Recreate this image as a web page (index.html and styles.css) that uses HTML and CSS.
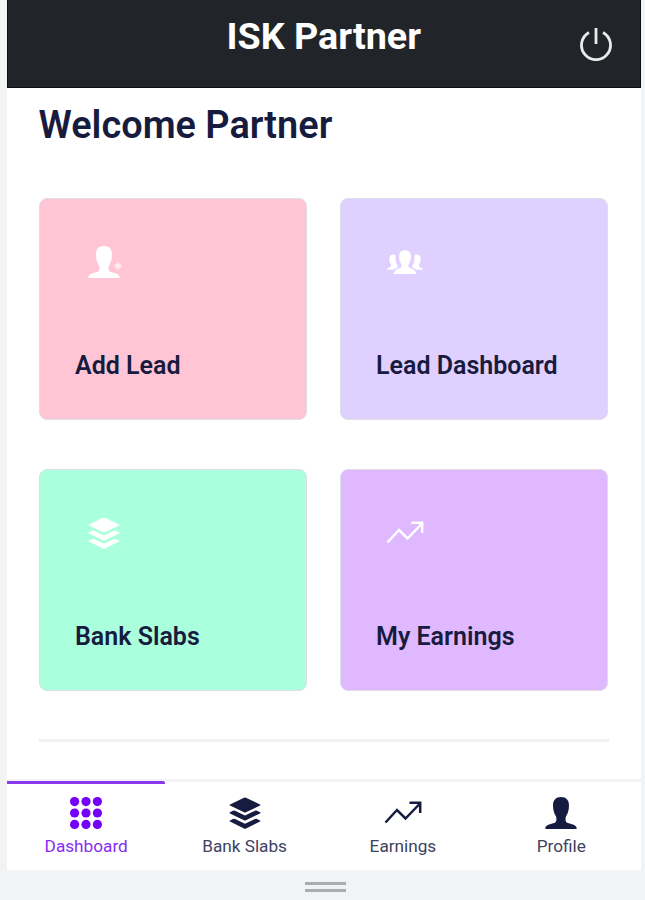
FILE: index.html
```html
<!DOCTYPE html>
<html lang="en">
<head>
<meta charset="utf-8">
<title>ISK Partner</title>
<link rel="stylesheet" href="styles.css">
</head>
<body>
<svg class="symbols" aria-hidden="true">
  <symbol id="layers" viewBox="0 0 32 32"><path d="M15 .7q1-.5 2 0L31 7.400q1 .6 0 1.200L17 15.300q-1 .5-2 0L1 8.600Q0 8 1 7.400z"/><path d="M1 15.200l3-1.400q1-.4 2 0l10 4.800 10-4.800q1-.4 2 0l3 1.400q1 .6 0 1.200L17 23.200q-1 .5-2 0L1 16.400q-1-.6 0-1.200z"/><path d="M1 23.400L4 22q1-.4 2 0l10 4.800L26 22q1-.4 2 0l3 1.400q1 .6 0 1.200l-14 6.800q-1 .5-2 0L1 24.600q-1-.6 0-1.200z"/></symbol>
  <symbol id="person" viewBox="0 0 32 32"><path d="M16 0c5.200 0 8 3 8 8.500 0 4.800-1.200 8-2.800 10.500-.9 1.600-1 5.600.6 6.600 1.800 1.200 8.900 1.600 9.900 5.200.2.800-.3 1.200-1.100 1.200H1.400c-.8 0-1.300-.4-1.100-1.200 1-3.600 8.100-4 9.900-5.200 1.600-1 1.500-5 .6-6.600C9.200 16.500 8 13.300 8 8.500 8 3 10.800 0 16 0z"/></symbol>
  <symbol id="trend" viewBox="0 0 38 24"><path d="M1.500 21.500L13 9l8.500 8.500L36 2.500M25.500 1.800H36.200V12" fill="none" stroke="currentColor" stroke-width="2.500"/></symbol>
</svg>
<div class="phone">
  <header class="topbar">
    <h1 class="brand">ISK Partner</h1>
    <svg class="power" viewBox="0 0 34 34"><path d="M10 5.500A14.500 14.500 0 1 0 24 5.500M17 1v16" fill="none" stroke="currentColor" stroke-width="2.800"/></svg>
  </header>
  <main class="content">
    <h2 class="welcome">Welcome Partner</h2>
    <div class="cards">
      <a class="card pink"><span class="slot"><svg class="icon" viewBox="0 0 32 32"><use href="#person"/></svg><svg class="plus" viewBox="0 0 8 8"><path d="M4 .5v7M.5 4h7" stroke="currentColor" stroke-width="2.800"/></svg></span><span class="label">Add Lead</span></a>
      <a class="card lilac"><span class="slot"><svg class="group" viewBox="0 0 36 25"><path d="M6.500 4.500c-3 0-4.200 2-4.200 4.800 0 2.400.7 3.900 1.600 5.200.4 1.600-.2 2.400-1.400 2.800-1.300.5-2.200 1-2.300 2.500h6.300c1-1.300 2.600-1.800 4.300-2.400l-.6-2.900C9 13 8.400 10.600 8.500 5z"/><path d="M29.500 4.500c3 0 4.200 2 4.200 4.800 0 2.400-.7 3.900-1.600 5.200-.4 1.600.2 2.400 1.400 2.800 1.300.5 2.200 1 2.300 2.500h-6.300c-1-1.300-2.600-1.800-4.300-2.400l.6-2.900c1.200-1.500 1.800-3.900 1.700-9.500z"/><path d="M18 .3c4.300 0 6 2.700 6 6.500 0 3.300-1 5.700-2.400 7.500-.4 1.800 0 3.100 1.600 3.800 2.500 1.100 5.600 1.800 5.900 5.900H6.900c.3-4.100 3.400-4.800 5.900-5.900 1.600-.7 2-2 1.600-3.800C13 12.500 12 10.100 12 6.800 12 3 13.700.3 18 .3z"/></svg></span><span class="label">Lead Dashboard</span></a>
      <a class="card mint"><span class="slot"><svg class="icon"><use href="#layers"/></svg></span><span class="label">Bank Slabs</span></a>
      <a class="card violet"><span class="slot"><svg class="trend"><use href="#trend"/></svg></span><span class="label">My Earnings</span></a>
    </div>
    <hr class="rule">
  </main>
  <nav class="tabs">
    <a class="tab active"><svg class="icon" viewBox="0 0 32 32"><g><circle cx="4.600" cy="4.600" r="4.600"/><circle cx="16" cy="4.600" r="4.600"/><circle cx="27.400" cy="4.600" r="4.600"/><circle cx="4.600" cy="16" r="4.600"/><circle cx="16" cy="16" r="4.600"/><circle cx="27.400" cy="16" r="4.600"/><circle cx="4.600" cy="27.400" r="4.600"/><circle cx="16" cy="27.400" r="4.600"/><circle cx="27.400" cy="27.400" r="4.600"/></g></svg><span>Dashboard</span></a>
    <a class="tab"><svg class="icon"><use href="#layers"/></svg><span>Bank Slabs</span></a>
    <a class="tab"><svg class="trend"><use href="#trend"/></svg><span>Earnings</span></a>
    <a class="tab"><svg class="icon"><use href="#person"/></svg><span>Profile</span></a>
  </nav>
</div>
<footer class="grip"><i></i><i></i></footer>
</body>
</html>
```
FILE: styles.css
```css
* { box-sizing: border-box; }
body { margin: 0; height: 900px; overflow: hidden; background: #f1f3f4; font-family: Roboto, "Liberation Sans", sans-serif; color: #171c3f; }
svg { display: block; fill: currentColor; }
.symbols { position: absolute; width: 0; height: 0; }
.phone { width: 633.500px; height: 870px; margin-left: 7px; background: #fff; display: flex; flex-direction: column; }
.topbar { height: 88px; background: #212529; color: #fff; display: grid; grid-template-columns: 1fr auto 1fr; border: solid #0b0e12; border-width: 0 1px 1px; }
.brand { grid-column: 2; margin: 14px 0 0; font-size: 37.700px; line-height: 44px; font-weight: 700; white-space: nowrap; }
.power { width: 34px; height: 34px; justify-self: end; margin: 27px 27px 0 0; color: #e8eaec; }
.content { flex: 1; padding: 15px 32px 0 31.500px; }
.welcome { margin: 0; font-size: 37.900px; line-height: 45px; font-weight: 600; }
.cards { margin-top: 50px; display: grid; grid-template-columns: 268.500px 268.500px; grid-auto-rows: 222px; gap: 49px 32.500px; }
.card { border-radius: 8px; border: 1px solid #dedfe5; padding: 46px 35.500px 0; }
.pink { background: #ffc5d5; }
.lilac { background: #dfd0ff; }
.mint { background: #aaffdd; }
.violet { background: #dfb8ff; }
.slot { display: flex; align-items: center; width: 57px; height: 34px; justify-content: center; color: #fff; }
.icon { width: 32px; height: 32px; }
.plus { width: 8px; height: 8px; margin: 8px -2px 0 -6px; opacity: .65; }
.group { width: 36px; height: 25px; margin-left: 1px; }
.trend { width: 38px; height: 24px; }
.label { display: block; margin-top: 71.500px; font-size: 25px; line-height: 30px; font-weight: 600; white-space: nowrap; }
.rule { border: 0; height: 3px; width: 570px; background: #f0f1f4; margin: 48px 0 0; }
.tabs { height: 91px; display: grid; grid-template-columns: repeat(4, 1fr); border-top: 3px solid #f2f3f6; }
.tab { display: grid; grid-template-rows: 32px 20px; row-gap: 7px; justify-items: center; align-content: start; align-items: center; padding-top: 15px; font-size: 17.200px; line-height: 20px; }
.tab svg { color: #151c3f; }
.tab span { color: #3d425e; }
.active { margin-top: -1px; border-top: 3px solid #8a38f0; padding-top: 13px; border-radius: 0 2px 0 0; }
.active svg { color: #7400f7; }
.active span { color: #872cf1; }
.grip { height: 30px; padding-top: 12px; margin-right: -5px; display: flex; flex-direction: column; align-items: center; gap: 4px; }
.grip i { width: 41px; height: 3px; background: #aaacad; }
```
